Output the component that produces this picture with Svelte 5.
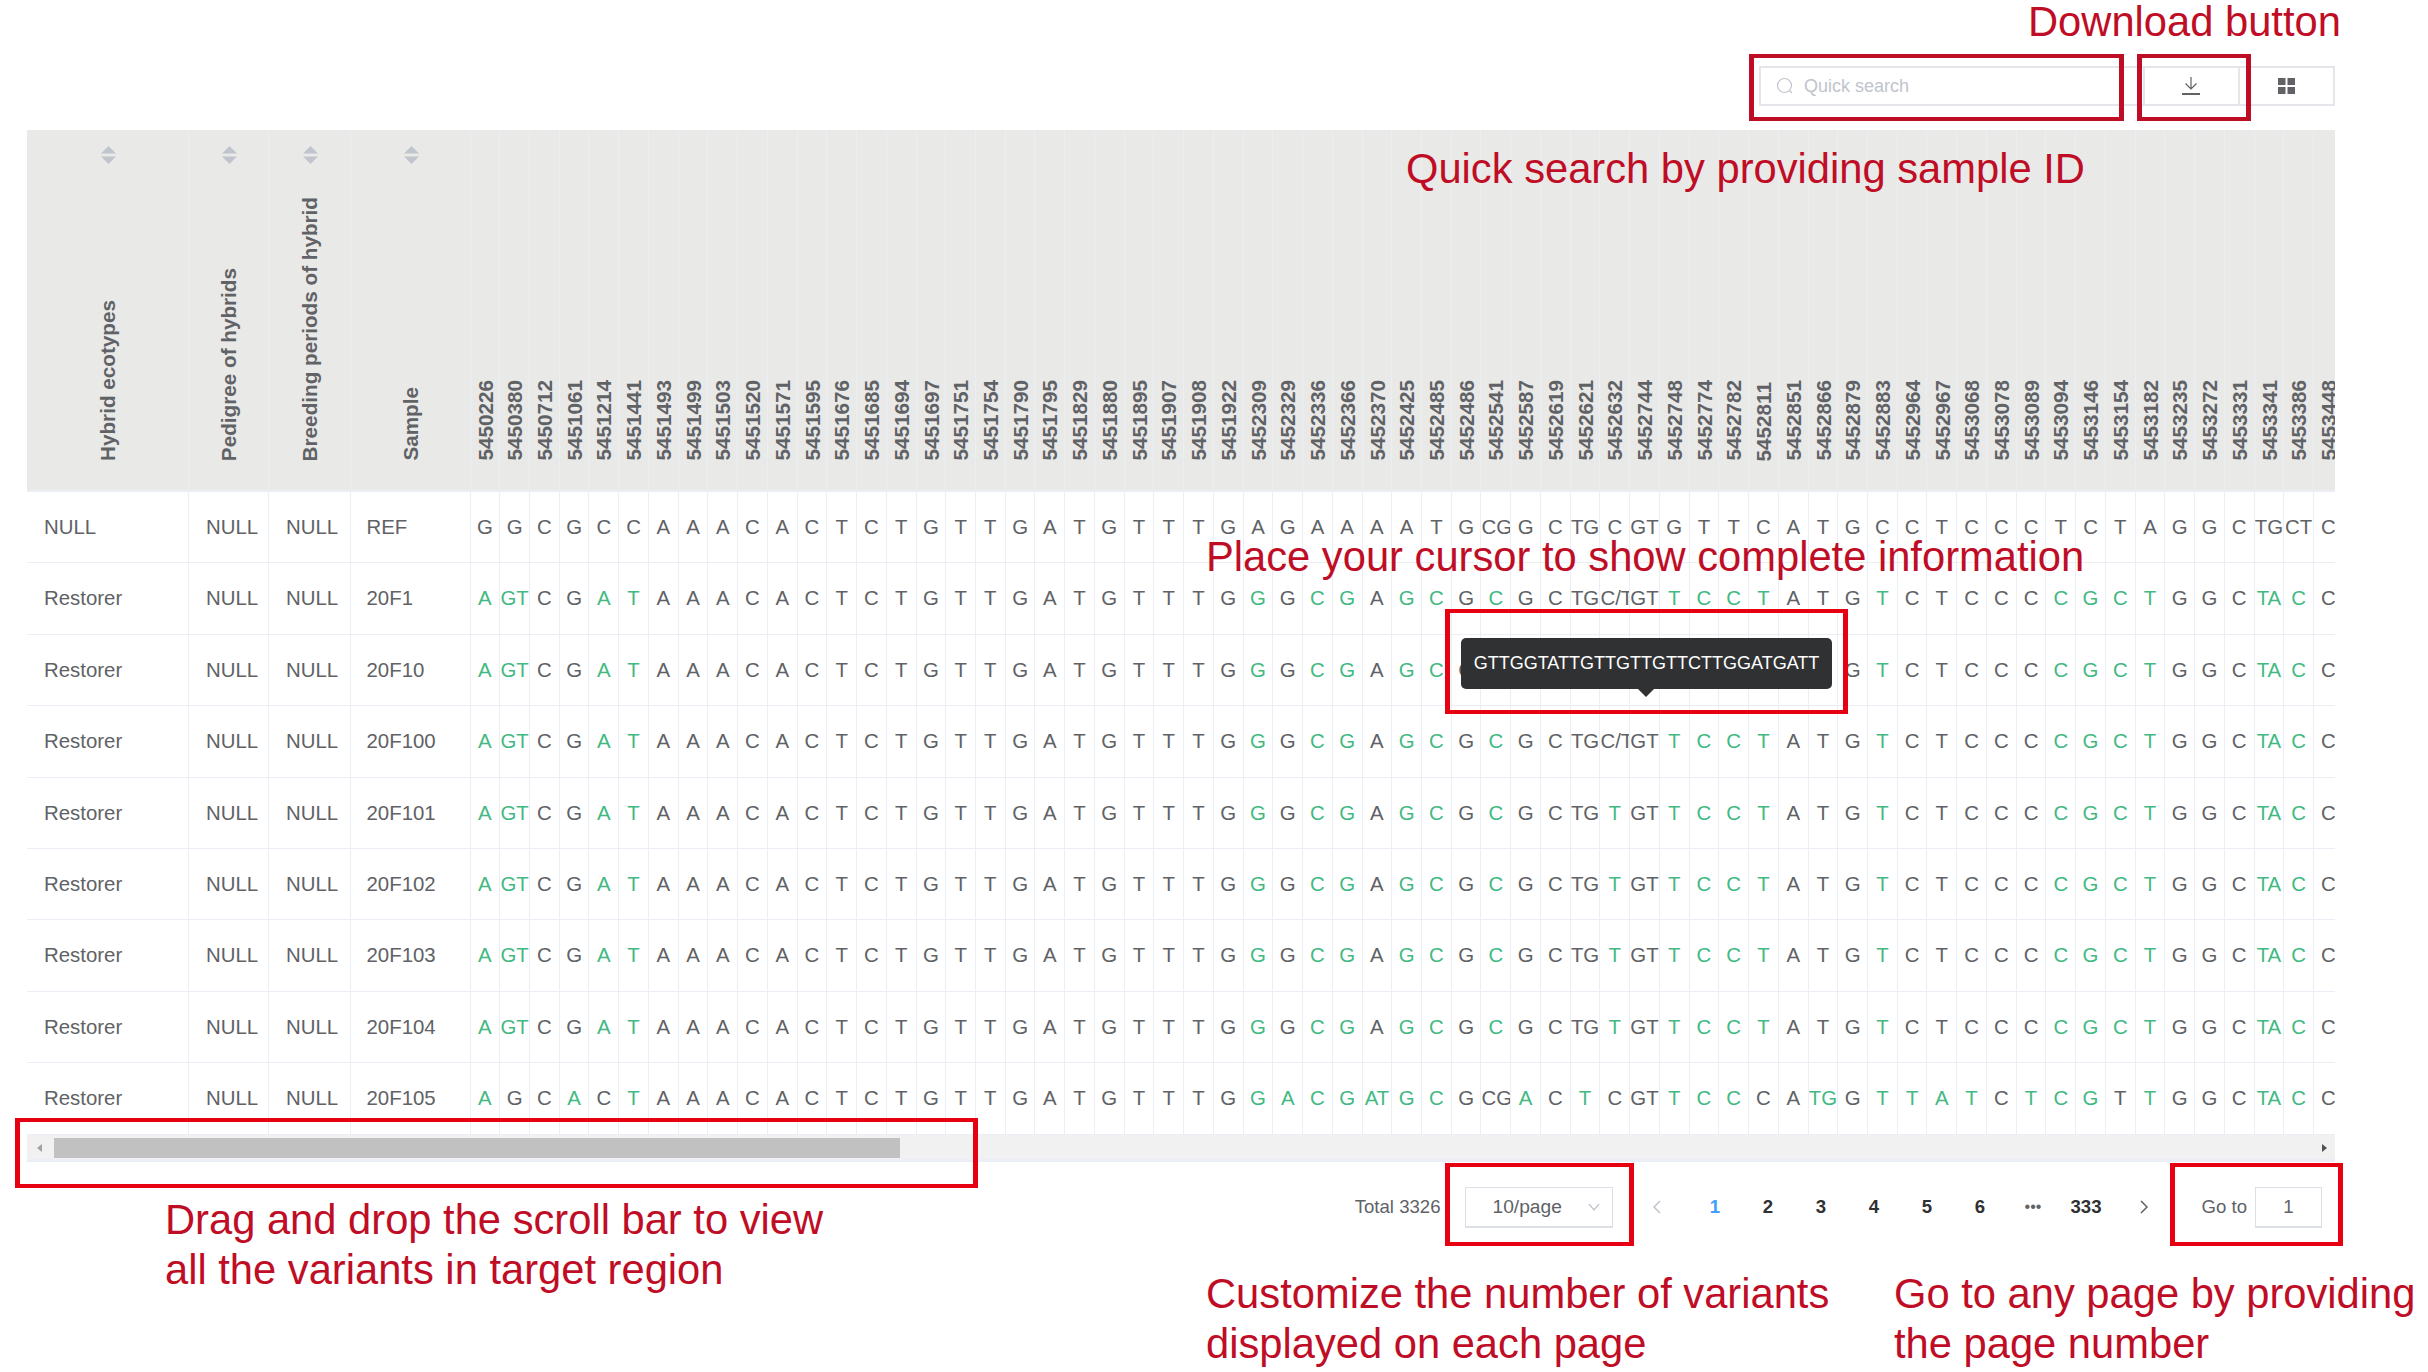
<script lang="ts">
	const positions = `5450226 5450380 5450712 5451061 5451214 5451441 5451493 5451499 5451503 5451520 5451571 5451595 5451676 5451685 5451694 5451697 5451751 5451754 5451790 5451795 5451829 5451880 5451895 5451907 5451908 5451922 5452309 5452329 5452336 5452366 5452370 5452425 5452485 5452486 5452541 5452587 5452619 5452621 5452632 5452744 5452748 5452774 5452782 5452811 5452851 5452866 5452879 5452883 5452964 5452967 5453068 5453078 5453089 5453094 5453146 5453154 5453182 5453235 5453272 5453331 5453341 5453386 5453448`.split(' ');

	const labels = ['Hybrid ecotypes', 'Pedigree of hybrids', 'Breeding periods of hybrid', 'Sample'];

	const ref = 'G G C G C C A A A C A C T C T G T T G A T G T T T G A G A A A A T G CG G C TG C GT G T T C A T G C C T C C C T C T A G G C TG CT C'.split(' ');

	const head = 'A GT C G A T A A A C A C T C T G T T G A T G T T T G G G C G A G C G C G C TG';
	const tail = 'T C C T A T G T C T C C C C G C T G G C TA C C';
	const hetero = `${head} C/T GT ${tail}`.split(' ');
	const homo = `${head} T GT ${tail}`.split(' ');
	const last = 'A G C A C T A A A C A C T C T G T T G A T G T T T G G A C G AT G C G CG A C T C GT T C C C A TG G T T A T C T C G T T G G C TA C C'.split(' ');

	const rows = [
		{ type: 'NULL', sample: 'REF', calls: ref },
		{ type: 'Restorer', sample: '20F1', calls: hetero },
		{ type: 'Restorer', sample: '20F10', calls: hetero },
		{ type: 'Restorer', sample: '20F100', calls: hetero },
		{ type: 'Restorer', sample: '20F101', calls: homo },
		{ type: 'Restorer', sample: '20F102', calls: homo },
		{ type: 'Restorer', sample: '20F103', calls: homo },
		{ type: 'Restorer', sample: '20F104', calls: homo },
		{ type: 'Restorer', sample: '20F105', calls: last }
	];

	const pages = ['1', '2', '3', '4', '5', '6', '•••', '333'];

	// heterozygous calls stay grey, only a changed base is green
	const isAlt = (call: string, i: number) => call !== ref[i] && !call.includes('/');
</script>

<div class="page">
	<div class="toolbar">
		<div class="search">
			<svg width="18" height="18" viewBox="0 0 18 18" fill="none" stroke="#c0c4cc" stroke-width="1.2">
				<circle cx="8.500" cy="8.500" r="7" />
				<path d="M13.500 13.500l2.500 2.500" />
			</svg>
			<span>Quick search</span>
		</div>
		<div class="tool download">
			<svg width="18" height="20" viewBox="0 0 18 20" fill="none" stroke="#606266" stroke-width="1.2">
				<path d="M9 1v11M3.500 7.500L9 13l5.500-5.500" />
				<path d="M0 18h18" stroke-width="2" />
			</svg>
		</div>
		<div class="tool grid-toggle">
			<svg width="17" height="16" viewBox="0 0 17 16" fill="#606266">
				<rect width="7.500" height="7" />
				<rect x="9.500" width="7.500" height="7" />
				<rect y="9" width="7.500" height="7" />
				<rect x="9.500" y="9" width="7.500" height="7" />
			</svg>
		</div>
	</div>

	<div class="table">
		<div class="row head">
			{#each labels as label}
				<div class="th">
					<svg class="sort" width="15" height="18" viewBox="0 0 15 18" fill="#c0c4cc">
						<path d="M7.500 0L15 7.500H0z" />
						<path d="M0 10.500h15L7.500 18z" />
					</svg>
					<span class="vert">{label}</span>
				</div>
			{/each}
			{#each positions as pos}
				<div class="th"><span class="vert">{pos}</span></div>
			{/each}
		</div>
		{#each rows as row}
			<div class="row">
				<div class="td info">{row.type}</div>
				<div class="td info">NULL</div>
				<div class="td info">NULL</div>
				<div class="td info sample">{row.sample}</div>
				{#each row.calls as call, i}
					<div class="td call" class:alt={isAlt(call, i)}>{call}</div>
				{/each}
			</div>
		{/each}
		<div class="scrollbar">
			<span class="arrow left"></span>
			<span class="thumb"></span>
			<span class="arrow right"></span>
		</div>
	</div>

	<div class="pagination">
		<span class="total">Total 3326</span>
		<div class="select">
			<span>10/page</span>
			<svg width="12" height="8" viewBox="0 0 12 8" fill="none" stroke="#c0c4cc" stroke-width="1.2"><path d="M1 1l5 6 5-6" /></svg>
		</div>
		<svg class="nav prev" width="10" height="16" viewBox="0 0 10 16" fill="none" stroke="#c0c4cc" stroke-width="1.5"><path d="M8 2L2 8l6 6" /></svg>
		{#each pages as p, i}
			<span class="num" class:current={i === 0} class:more={p === '•••'}>{p}</span>
		{/each}
		<svg class="nav next" width="10" height="16" viewBox="0 0 10 16" fill="none" stroke="#606266" stroke-width="1.5"><path d="M2 2l6 6-6 6" /></svg>
		<span class="goto">Go to</span>
		<div class="jump">1</div>
	</div>

	<div class="tooltip">GTTGGTATTGTTGTTGTTCTTGGATGATT</div>

	<div class="box crimson search-box"></div>
	<div class="box crimson download-box"></div>
	<div class="box tooltip-box"></div>
	<div class="box scroll-box"></div>
	<div class="box size-box"></div>
	<div class="box goto-box"></div>

	<div class="note note-download">Download button</div>
	<div class="note note-search">Quick search by providing sample ID</div>
	<div class="note note-cursor">Place your cursor to show complete information</div>
	<div class="note note-drag">Drag and drop the scroll bar to view<br />all the variants in target region</div>
	<div class="note note-size">Customize the number of variants<br />displayed on each page</div>
	<div class="note note-goto">Go to any page by providing<br />the page number</div>
</div>

<style>
	:global(body) {
		margin: 0;
		background: #fff;
	}

	.page {
		position: relative;
		width: 2428px;
		height: 1372px;
		overflow: hidden;
		padding: 66px 93px 0 27px;
		box-sizing: border-box;
		font-family: 'Liberation Sans', Arial, sans-serif;
		font-size: 20.4px;
		color: #606266;
	}

	.toolbar {
		display: flex;
		justify-content: flex-end;
		height: 40px;
		margin-bottom: 24px;
	}

	.search {
		display: flex;
		align-items: center;
		gap: 10px;
		width: 384px;
		padding-left: 15px;
		box-sizing: border-box;
		border: 2px solid #e4e6eb;
		border-right: 0;
		font-size: 18px;
		color: #c0c4cc;
	}

	.tool {
		display: flex;
		align-items: center;
		justify-content: center;
		border: 2px solid #e4e6eb;
		border-right: 0;
		box-sizing: border-box;
	}

	.download {
		width: 95px;
		padding-right: 2px;
	}

	.grid-toggle {
		width: 97px;
		border-right: 2px solid #e4e6eb;
	}

	.table {
		width: 2308px;
		overflow: hidden;
	}

	.row {
		display: grid;
		grid-template-columns: 162px 80px 81.5px 120px repeat(63, 29.74px);
		height: 71.4px;
		box-sizing: border-box;
		border-bottom: 1px solid #ebeef5;
	}

	.head {
		height: 362px;
		background: #e9e9e8;
		border-bottom: 2px solid #ebeef5;
	}

	.th {
		display: flex;
		flex-direction: column;
		align-items: center;
		justify-content: flex-end;
		position: relative;
		padding: 0 0 29px 2px;
		box-sizing: border-box;
		border-right: 1px solid #ebeef5;
		font-size: 20.7px;
		font-weight: bold;
		overflow: hidden;
	}

	.sort {
		position: absolute;
		top: 16px;
	}

	.vert {
		writing-mode: vertical-rl;
		transform: rotate(180deg);
		white-space: nowrap;
		line-height: 1;
	}

	.td {
		box-sizing: border-box;
		border-right: 1px solid #ebeef5;
		line-height: 70px;
		white-space: nowrap;
		overflow: hidden;
	}

	.info {
		padding-left: 17px;
	}

	.sample {
		padding-left: 16px;
	}

	.call {
		text-align: center;
	}

	.alt {
		color: #42b983;
	}

	.scrollbar {
		position: relative;
		height: 27px;
		padding-top: 3.5px;
		box-sizing: border-box;
		background: #f1f1f1;
		border-bottom: 3px solid #ebeef5;
	}

	.thumb {
		display: block;
		margin-left: 27px;
		width: 846px;
		height: 20px;
		background: #c1c1c1;
	}

	.arrow {
		position: absolute;
		top: 9px;
		border: 4px solid transparent;
		border-left-width: 0;
		border-right: 5px solid #a3a3a3;
	}

	.arrow.left {
		left: 10px;
	}

	.arrow.right {
		right: 8px;
		border-right-width: 0;
		border-left: 5px solid #505050;
	}

	.pagination {
		display: flex;
		align-items: center;
		justify-content: flex-end;
		height: 41px;
		margin-top: 25px;
		padding-right: 13px;
		font-size: 18.6px;
	}

	.total {
		margin-right: 24px;
	}

	.select {
		display: flex;
		align-items: center;
		justify-content: space-between;
		width: 148px;
		height: 41px;
		padding: 0 12px 0 27px;
		box-sizing: border-box;
		border: 1px solid #dcdfe6;
		border-bottom-width: 2px;
		font-size: 19.2px;
	}

	.nav {
		flex: none;
	}

	.prev {
		margin-left: 39px;
		margin-right: 27px;
	}

	.next {
		margin-left: 26px;
		margin-right: 53px;
	}

	.num {
		width: 53px;
		text-align: center;
		font-weight: bold;
		color: #303133;
	}

	.num.current {
		color: #409eff;
	}

	.num.more {
		font-size: 16px;
		font-weight: normal;
		color: #606266;
	}

	.goto {
		margin-right: 8px;
	}

	.jump {
		display: flex;
		align-items: center;
		justify-content: center;
		width: 67px;
		height: 41px;
		box-sizing: border-box;
		border: 1px solid #dcdfe6;
		border-bottom-width: 2px;
	}

	.tooltip {
		position: absolute;
		left: 1461px;
		top: 638px;
		width: 371px;
		height: 51px;
		line-height: 51px;
		text-align: center;
		white-space: nowrap;
		border-radius: 5px;
		background: #303133;
		color: #fff;
		font-size: 18px;
	}

	.tooltip::after {
		content: '';
		position: absolute;
		left: 177px;
		top: 51px;
		border: 8px solid transparent;
		border-top-color: #303133;
		border-bottom: 0;
	}

	.box {
		position: absolute;
		box-sizing: border-box;
		border-style: solid;
		border-width: 4px 5px;
		border-color: #e60012;
	}

	.box.crimson {
		border-color: #c00d26;
	}

	.search-box {
		left: 1749px;
		top: 54px;
		width: 375px;
		height: 67px;
	}

	.download-box {
		left: 2137px;
		top: 54px;
		width: 114px;
		height: 67px;
	}

	.tooltip-box {
		left: 1445px;
		top: 609px;
		width: 403px;
		height: 105px;
	}

	.scroll-box {
		left: 15px;
		top: 1118px;
		width: 963px;
		height: 70px;
	}

	.size-box {
		left: 1445px;
		top: 1163px;
		width: 189px;
		height: 83px;
	}

	.goto-box {
		left: 2170px;
		top: 1163px;
		width: 173px;
		height: 83px;
	}

	.note {
		position: absolute;
		font-size: 41.7px;
		line-height: 50px;
		color: #c00d26;
		white-space: nowrap;
	}

	.note-download {
		left: 2028px;
		top: -3px;
	}

	.note-search {
		left: 1406px;
		top: 144px;
	}

	.note-cursor {
		left: 1206px;
		top: 532px;
	}

	.note-drag {
		left: 165px;
		top: 1195px;
	}

	.note-size {
		left: 1206px;
		top: 1269px;
	}

	.note-goto {
		left: 1894px;
		top: 1269px;
	}
</style>
